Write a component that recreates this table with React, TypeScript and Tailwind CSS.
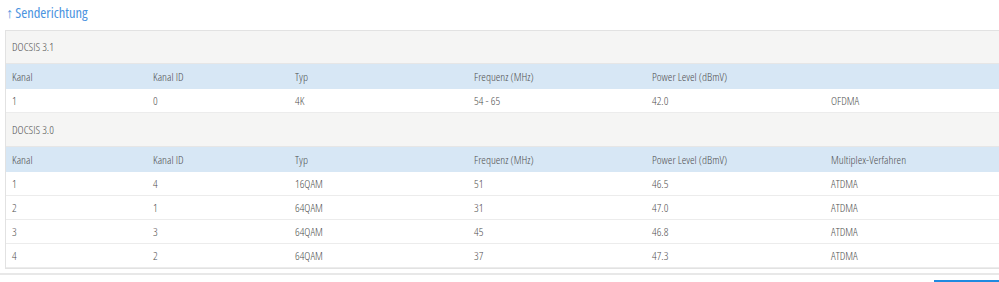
const cols = 'grid grid-cols-[141px_142px_179px_178px_179px_178px]'

type Row = string[]

function GroupRow({ label, tall }: { label: string; tall?: boolean }) {
  return (
    <div className={`${tall ? 'h-[34px]' : 'h-[33px]'} flex items-center bg-[#f5f5f4] border-b border-[#e6e6e6] px-[6px]`}>
      <span>{label}</span>
    </div>
  )
}

function HeaderRow({ cells }: { cells: Row }) {
  return (
    <div className={`${cols} h-[25px] items-center bg-[#d7e7f5]`}>
      {cells.map((c, i) => (
        <div key={i} className="px-[6px] whitespace-nowrap">
          {c}
        </div>
      ))}
    </div>
  )
}

function DataRow({ cells }: { cells: Row }) {
  return (
    <div className={`${cols} h-[24px] items-center bg-white border-b border-[#ececec]`}>
      {cells.map((c, i) => (
        <div key={i} className="px-[6px] whitespace-nowrap">
          {c}
        </div>
      ))}
    </div>
  )
}

const head = ['Kanal', 'Kanal ID', 'Typ', 'Frequenz (MHz)', 'Power Level (dBmV)']

const docsis30: Row[] = [
  ['1', '4', '16QAM', '51', '46.5', 'ATDMA'],
  ['2', '1', '64QAM', '31', '47.0', 'ATDMA'],
  ['3', '3', '64QAM', '45', '46.8', 'ATDMA'],
  ['4', '2', '64QAM', '37', '47.3', 'ATDMA'],
]

export default function App() {
  return (
    <div className="w-[999px] h-[282px] overflow-hidden bg-white font-['Open_Sans',sans-serif] font-light font-stretch-[87.5%] text-[11.5px] text-[#505050]">
      <div className="h-[30px] px-[6px] pt-[3px] text-[14.5px] font-normal text-[#4a93e0] leading-[20px]">
        <span className="mr-[2px]">↑</span>Senderichtung
      </div>
      <div className="ml-[5px] w-[1000px] border-l border-t border-b border-[#e2e2e2]">
        <GroupRow label="DOCSIS 3.1" />
        <HeaderRow cells={[...head, '']} />
        <DataRow cells={['1', '0', '4K', '54 - 65', '42.0', 'OFDMA']} />
        <GroupRow label="DOCSIS 3.0" tall />
        <HeaderRow cells={[...head, 'Multiplex-Verfahren']} />
        {docsis30.map((r, i) => (
          <DataRow key={i} cells={r} />
        ))}
      </div>
      <div className="mt-[4px] h-[2px] bg-[#e8e8e8]" />
      <div className="mt-[5px] flex justify-end">
        <div className="w-[65px] h-[2px] bg-[#1f8ae0]" />
      </div>
    </div>
  )
}
